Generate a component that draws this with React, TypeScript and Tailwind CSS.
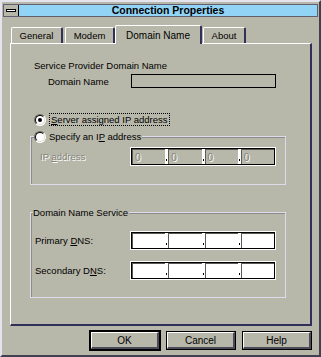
import type { FC, ReactNode } from "react";

const font = "font-['Liberation_Sans',Arial,sans-serif]";

const Radio: FC<{ checked?: boolean }> = ({ checked }) => (
    <div className="w-[12px] h-[12px] rounded-full border border-t-[#6a6a60] border-l-[#6a6a60] border-r-white border-b-white bg-white flex items-center justify-center shrink-0">
        <div className="w-[10px] h-[10px] rounded-full border border-t-black border-l-black border-r-[#d8d8d0] border-b-[#d8d8d0] bg-white flex items-center justify-center">
            {checked && <div className="w-[4px] h-[4px] rounded-full bg-black" />}
        </div>
    </div>
);

const IpBox: FC<{ disabled?: boolean }> = ({ disabled }) => {
    const seg = (i: number) => (
        <div
            key={i}
            className={`flex-1 border-t border-l border-[#5a5a52] flex items-center pl-[2px] text-[10px] ${
                disabled ? "bg-[#b8b8aa] text-[#84847a] [text-shadow:1px_1px_0_#fff]" : "bg-white"
            }`}
        >
            {disabled ? "0" : ""}
        </div>
    );
    const dot = (i: number) => (
        <div key={"d" + i} className="w-[3px] bg-white flex flex-col justify-end items-center pb-[3px]">
            <div className="w-[1px] h-[2px] bg-black" />
        </div>
    );
    return (
        <div className="w-[146px] h-[19px] border border-white">
            <div className="w-full h-full border border-black flex">
                {seg(0)}
                {dot(0)}
                {seg(1)}
                {dot(1)}
                {seg(2)}
                {dot(2)}
                {seg(3)}
            </div>
        </div>
    );
};

const Tab: FC<{ active?: boolean; w: string; children: ReactNode }> = ({ active, w, children }) => (
    <div
        className={`${w} flex items-center justify-center rounded-t-[2px] border-l border-t border-white border-r-2 border-r-[#303058] bg-[#b8b8aa] ${
            active ? "h-[19px] -mb-[1px] relative z-10 text-[10px]" : "h-[16px] text-[9.5px]"
        }`}
    >
        {children}
    </div>
);

const Button: FC<{ children: ReactNode; isDefault?: boolean }> = ({ children, isDefault }) => (
    <div className={`h-[19px] w-[70px] border border-black bg-[#b8b8aa] ${isDefault ? "outline outline-1 outline-black" : ""}`}>
        <div className="w-full h-full border-l border-t border-white border-r-2 border-b-2 border-r-[#4a4a58] border-b-[#4a4a58] flex items-center justify-center text-[10px]">
            {children}
        </div>
    </div>
);

const App: FC = () => {
    return (
        <div className={`${font} w-[321px] h-[357px] bg-[#b8b8aa] border-l-2 border-t-2 border-l-[#e4e4ee] border-t-[#e4e4ee] border-r-2 border-b-2 border-r-[#404050] border-b-[#404050] text-black leading-[13px] overflow-hidden`}>
            {/* TITLE BAR */}
            <div className="mt-[2px] ml-[1px] mr-[1px] h-[13px] flex border border-[#606070]">
                <div className="w-[15px] h-full flex items-center justify-center bg-[#b8b8aa] border-r border-black">
                    <div className="w-[10px] h-[3px] bg-white border border-black" />
                </div>
                <div className="flex-1 bg-[#92d4f6] flex items-center justify-center text-[10.5px] font-bold">
                    Connection Properties
                </div>
            </div>

            {/* TABS */}
            <div className="mt-[7px] ml-[9px] h-[19px] flex items-end">
                <Tab w="w-[52px]">General</Tab>
                <div className="w-[2px]" />
                <Tab w="w-[50px]">Modem</Tab>
                <Tab active w="w-[87px]">Domain Name</Tab>
                <div className="w-[1px]" />
                <Tab w="w-[43px]">About</Tab>
            </div>

            {/* PANEL */}
            <div className="ml-[8px] w-[302px] h-[283px] border-l border-t border-white border-r-2 border-b-2 border-r-[#303058] border-b-[#303058] text-[9.5px] flex flex-col">
                <div className="mt-[15px] ml-[23px] h-[13px] flex items-center">Service Provider Domain Name</div>

                <div className="mt-[2px] h-[14px] flex items-center">
                    <div className="ml-[37px] w-[83px]">Domain Name</div>
                    <div className="w-[145px] h-[14px] border border-black" />
                </div>

                <div className="mt-[25px] ml-[23px] h-[13px] flex items-center gap-[3px]">
                    <Radio checked />
                    <span className="border border-dotted border-black px-[1px] leading-[11px]">
                        <span className="underline">S</span>erver assigned IP address
                    </span>
                </div>

                {/* GROUP 1 */}
                <div className="mt-[10px] ml-[19px] w-[256px] h-[49px] border border-[#dcdcee] shadow-[inset_1px_1px_0_#8c8c84]">
                    <div className="-mt-[7px] ml-[3px] w-fit h-[13px] flex items-center gap-[3px] bg-[#b8b8aa] pr-[1px]">
                        <Radio />
                        <span>
                            Specify an I<span className="underline">P</span> address
                        </span>
                    </div>
                    <div className="mt-[4px] h-[19px] flex items-center">
                        <div className="ml-[9px] w-[90px] text-[#84847a] [text-shadow:1px_1px_0_#fff]">
                            IP <span className="underline">a</span>ddress
                        </div>
                        <IpBox disabled />
                    </div>
                </div>

                {/* GROUP 2 */}
                <div className="mt-[27px] ml-[19px] w-[256px] h-[86px] border border-[#dcdcee] shadow-[inset_1px_1px_0_#8c8c84]">
                    <div className="-mt-[7px] ml-[2px] w-fit h-[13px] flex items-center bg-[#b8b8aa] pr-[1px]">
                        Domain Name Service
                    </div>
                    <div className="mt-[12px] h-[19px] flex items-center">
                        <div className="ml-[4px] w-[95px]">
                            Primary <span className="underline">D</span>NS:
                        </div>
                        <IpBox />
                    </div>
                    <div className="mt-[11px] h-[19px] flex items-center">
                        <div className="ml-[4px] w-[95px]">
                            Secondary D<span className="underline">N</span>S:
                        </div>
                        <IpBox />
                    </div>
                </div>
            </div>

            {/* BUTTONS */}
            <div className="mt-[5px] ml-[8px] w-[302px] flex justify-end gap-[6px]">
                <Button isDefault>OK</Button>
                <Button>Cancel</Button>
                <Button>Help</Button>
            </div>
        </div>
    );
};

export default App;
